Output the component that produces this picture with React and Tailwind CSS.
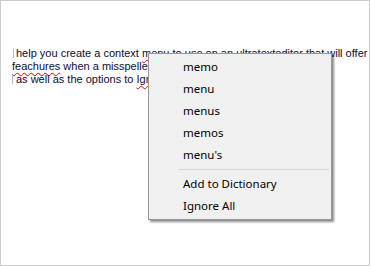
import React from "react";

const suggestions = ["memo", "menu", "menus", "memos", "menu's"];
const actions = ["Add to Dictionary", "Ignore All"];

function Squiggle({ children }) {
  return (
    <span className="underline decoration-wavy decoration-[#e00000] decoration-1 underline-offset-2">
      {children}
    </span>
  );
}

function MenuItem({ label }) {
  return (
    <div className="h-[22px] flex items-center pl-[34px] text-black">{label}</div>
  );
}

export default function App() {
  return (
    <div className="relative w-[370px] h-[266px] bg-white border border-[#cccccc] overflow-hidden">
      {/* editor text */}
      <div
        className="pt-[46px] text-[11px] leading-[13px] text-[#0c0c30] whitespace-nowrap"
        style={{ fontFamily: '"Liberation Sans", Arial, sans-serif' }}
      >
        <div className="flex items-center ml-[12px]">
          <span className="w-px h-[9px] bg-[#b4b4dc] mr-[2px]" />
          <span>
            help you create a context <Squiggle>menu</Squiggle> to use on an{" "}
            <Squiggle>ultratexteditor</Squiggle> that will offer
          </span>
        </div>
        <div className="ml-[11px]">
          <Squiggle>feachures</Squiggle> when a misspelled word is right clicked. Then you will
        </div>
        <div className="flex items-center ml-[11px]">
          <span className="w-px h-[9px] bg-[#b4b4dc] mr-[3px]" />
          <span>
            as well as the options to <Squiggle>Ignore</Squiggle> All or Add to Dictionary.
          </span>
        </div>
      </div>

      {/* spell check context menu */}
      <div
        className="absolute left-[147px] top-[52px] w-[184px] bg-[#f0f0f0] border border-[#979797] py-[2px] text-[11.5px] shadow-[2px_2px_2px_rgba(0,0,0,0.45)]"
        style={{ fontFamily: '"Noto Sans", "Open Sans", sans-serif' }}
      >
        {suggestions.map((s) => (
          <MenuItem key={s} label={s} />
        ))}
        <div className="h-[7px] flex items-center pl-[30px] pr-[2px]">
          <div className="h-px w-full bg-[#d7d7d7]" />
        </div>
        {actions.map((s) => (
          <MenuItem key={s} label={s} />
        ))}
      </div>
    </div>
  );
}
